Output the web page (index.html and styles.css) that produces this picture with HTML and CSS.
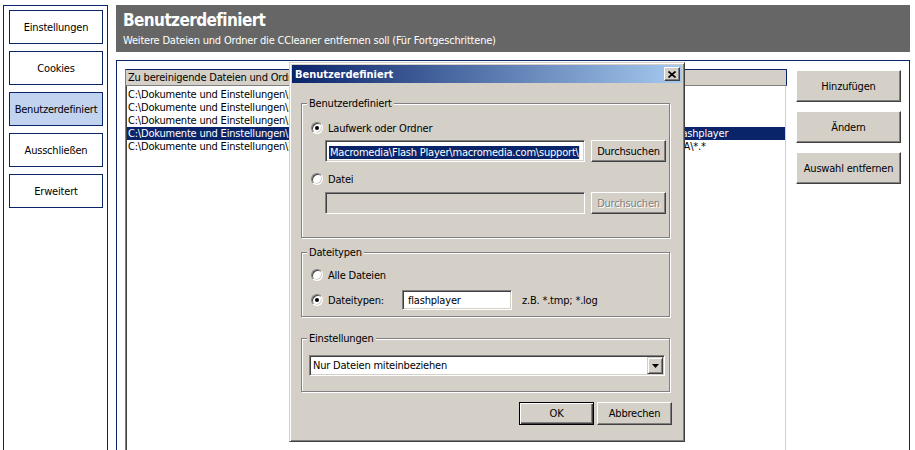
FILE: index.html
```html
<!DOCTYPE html>
<html lang="de">
<head>
  <meta charset="UTF-8" />
  <meta name="viewport" content="width=device-width, initial-scale=1.0" />
  <title>Benutzerdefiniert - CCleaner</title>
  <link rel="stylesheet" href="styles.css">
</head>
<body>

  <div class="app">
    <!-- linke Navigation -->
    <aside class="sidebar">
      <button class="nav-btn">Einstellungen</button>
      <button class="nav-btn">Cookies</button>
      <button class="nav-btn active">Benutzerdefiniert</button>
      <button class="nav-btn">Ausschließen</button>
      <button class="nav-btn">Erweitert</button>
    </aside>

    <main class="main">
      <header class="page-head">
        <h1>Benutzerdefiniert</h1>
        <p>Weitere Dateien und Ordner die CCleaner entfernen soll (Für Fortgeschrittene)</p>
      </header>

      <section class="panel">
        <div class="file-list">
          <div class="list-head">Zu bereinigende Dateien und Ordner</div>
          <ul class="list-body">
            <li>C:\Dokumente und Einstellungen\Benutzer\Lokale Einstellungen\Temp\*.tmp</li>
            <li>C:\Dokumente und Einstellungen\Benutzer\Recent\*.lnk</li>
            <li>C:\Dokumente und Einstellungen\Benutzer\Anwendungsdaten\Sun\Java\*.*</li>
            <li class="sel">C:\Dokumente und Einstellungen\Benutzer\Anwendungsdaten\Macromedia\Flash Player\macromedia.com\support\flashplayer</li>
            <li>C:\Dokumente und Einstellungen\Benutzer\Anwendungsdaten\Macromedia\Flash Player\#SharedObjects\Q7XK2ZPMA\*.*</li>
          </ul>
        </div>
        <div class="side-actions">
          <button class="btn">Hinzufügen</button>
          <button class="btn">Ändern</button>
          <button class="btn">Auswahl entfernen</button>
        </div>
      </section>
    </main>
  </div>

  <!-- Dialog liegt über der Liste -->
  <div class="dialog">
    <div class="dlg-title">
      <span>Benutzerdefiniert</span>
      <button class="dlg-close">
        <svg width="8" height="7" viewBox="0 0 8 7"><path d="M0.5 0.5 L7.5 6.5 M7.5 0.5 L0.5 6.5" stroke="#000" stroke-width="1.7" fill="none"/></svg>
      </button>
    </div>

    <fieldset class="group">
      <legend>Benutzerdefiniert</legend>
      <div class="group-body g-path">
        <div class="opt"><span class="radio on"></span>Laufwerk oder Ordner</div>
        <div class="path-row">
          <div class="field"><span class="selected">Macromedia\Flash Player\macromedia.com\support\</span><span class="caret"></span></div>
          <button class="btn small">Durchsuchen</button>
        </div>
        <div class="opt gap-top"><span class="radio"></span>Datei</div>
        <div class="path-row second">
          <div class="field disabled"></div>
          <button class="btn small" disabled>Durchsuchen</button>
        </div>
      </div>
    </fieldset>

    <fieldset class="group g2">
      <legend>Dateitypen</legend>
      <div class="group-body g-types">
        <div class="opt"><span class="radio"></span>Alle Dateien</div>
        <div class="opt types-row">
          <span class="radio on"></span>
          <span class="type-label">Dateitypen:</span>
          <div class="field type-field">flashplayer</div>
          <span class="hint">z.B. *.tmp; *.log</span>
        </div>
      </div>
    </fieldset>

    <fieldset class="group g3">
      <legend>Einstellungen</legend>
      <div class="group-body g-mode">
        <div class="combo">
          <span>Nur Dateien miteinbeziehen</span>
          <span class="combo-btn">
            <svg width="7" height="4" viewBox="0 0 7 4"><path d="M0 0 H7 L3.5 4 Z" fill="#000"/></svg>
          </span>
        </div>
      </div>
    </fieldset>

    <div class="dlg-buttons">
      <button class="btn default">OK</button>
      <button class="btn">Abbrechen</button>
    </div>
  </div>

</body>
</html>
```

FILE: styles.css
```css
* {
  box-sizing: border-box;
}

html, body {
  margin: 0;
  height: 450px;
  overflow: hidden;
}

body {
  font-family: "DejaVu Sans Condensed", "DejaVu Sans", sans-serif;
  font-stretch: condensed;
  font-size: 11px;
  letter-spacing: -0.2px;
  color: #000;
  background: #fff;
  position: relative;
}

button {
  font: inherit;
  color: inherit;
  letter-spacing: inherit;
  padding: 0;
  cursor: pointer;
}

.app {
  display: flex;
  gap: 8px;
  padding: 5px 0 0 3px;
  height: 470px;
}

/* linke Navigation */
.sidebar {
  width: 105px;
  border: 1px solid #0a246a;
  border-bottom: none;
  padding: 4px 0 0 5px;
  display: flex;
  flex-direction: column;
  gap: 7px;
}

.nav-btn {
  width: 94px;
  height: 34px;
  background: #fff;
  border: 1px solid #0a246a;
  text-align: center;
}

.nav-btn.active {
  background: #c2d3f0;
}

.main {
  width: 794px;
  display: flex;
  flex-direction: column;
  gap: 8px;
}

.page-head {
  height: 47px;
  background: #666;
  color: #fff;
  padding: 4px 7px 0;
}

.page-head h1 {
  margin: 0;
  font-size: 17px;
  font-weight: bold;
  letter-spacing: -0.6px;
  line-height: 22px;
}

.page-head p {
  margin: 3px 0 0;
  line-height: 13px;
}

.panel {
  flex: 1;
  display: flex;
  gap: 9px;
  border: 1px solid #0a246a;
  border-bottom: none;
  padding: 8px 8px 0 8px;
}

.file-list {
  width: 662px;
  display: flex;
  flex-direction: column;
}

.list-head {
  height: 17px;
  background: #d4d0c8;
  border: 1px solid;
  border-color: #0a246a #0a246a #808080 #808080;
  padding-left: 2px;
  line-height: 15px;
  white-space: nowrap;
  overflow: hidden;
}

.list-body {
  flex: 1;
  list-style: none;
  margin: 0 1px 0 0;
  padding: 2px 0 0 1px;
  border-left: 1px solid #808080;
  border-right: 1px solid #d4d0c8;
  box-shadow: inset 1px 0 0 #404040;
  overflow: hidden;
}

.list-body li {
  height: 13px;
  line-height: 13px;
  padding-left: 1px;
  white-space: nowrap;
}

.list-body li.sel {
  background: #0a246a;
  color: #fff;
}

.side-actions {
  width: 105px;
  padding-top: 1px;
  display: flex;
  flex-direction: column;
  gap: 9px;
}

/* klassischer Windows-Button */
.btn {
  height: 32px;
  background: #d4d0c8;
  border: 1px solid;
  border-color: #fff #404040 #404040 #fff;
  box-shadow: inset -1px -1px 0 #808080;
  text-align: center;
}

.btn.small {
  width: 75px;
  height: 22px;
}

.btn:disabled {
  color: #808080;
  text-shadow: 1px 1px 0 #fff;
  cursor: default;
}

/* Dialog */
.dialog {
  position: absolute;
  left: 289px;
  top: 62px;
  width: 396px;
  height: 380px;
  background: #d4d0c8;
  border: 1px solid;
  border-color: #d4d0c8 #404040 #404040 #d4d0c8;
  box-shadow: inset 1px 1px 0 #fff, inset -1px -1px 0 #808080;
  padding: 2px;
}

.dlg-title {
  height: 18px;
  background: linear-gradient(to right, #0a246a, #a6caf0);
  color: #fff;
  font-weight: bold;
  letter-spacing: 0;
  display: flex;
  align-items: center;
  justify-content: space-between;
  padding: 0 2px 0 3px;
}

.dlg-close {
  width: 16px;
  height: 14px;
  background: #d4d0c8;
  border: 1px solid;
  border-color: #fff #404040 #404040 #fff;
  box-shadow: inset -1px -1px 0 #808080;
  display: flex;
  align-items: center;
  justify-content: center;
}

.group {
  margin: 14px 12px 0 9px;
  padding: 0;
  border: 1px solid #808080;
  box-shadow: inset 1px 1px 0 #fff, 1px 1px 0 #fff;
  min-width: 0;
}

.group legend {
  margin-left: 5px;
  padding: 0 2px;
  line-height: 13px;
  background: #d4d0c8;
}

.group.g2 {
  margin-top: 8px;
}

.group.g3 {
  margin-top: 15px;
}

.g-path {
  padding: 7px 0 23px 9px;
}

.g-types {
  padding: 5px 0 5px 9px;
}

.g-mode {
  padding: 10px 0 15px 7px;
}

.opt {
  height: 22px;
  display: flex;
  align-items: center;
  gap: 5px;
  white-space: nowrap;
}

.opt.gap-top {
  margin-top: 6px;
}

.types-row {
  margin-top: 3px;
  gap: 0;
}

.types-row .radio {
  margin-right: 5px;
}

.type-label {
  width: 74px;
}

.hint {
  margin-left: 10px;
}

.radio {
  position: relative;
  flex: none;
  width: 12px;
  height: 12px;
  border-radius: 50%;
  background: #fff;
  border: 1px solid;
  border-color: #808080 #fff #fff #808080;
  box-shadow: inset 1px 1px 0 #404040, inset -1px -1px 0 #d4d0c8;
}

.radio.on::after {
  content: "";
  position: absolute;
  left: 3px;
  top: 3px;
  width: 4px;
  height: 4px;
  border-radius: 50%;
  background: #000;
}

.path-row {
  display: flex;
  gap: 6px;
  margin: 1px 0 0 14px;
  height: 22px;
}

.path-row.second {
  margin-top: 2px;
}

/* versenkte Eingabefelder */
.field {
  width: 260px;
  height: 22px;
  background: #fff;
  border: 1px solid;
  border-color: #808080 #fff #fff #808080;
  box-shadow: inset 1px 1px 0 #404040, inset -1px -1px 0 #d4d0c8;
  padding: 2px 0 0 3px;
  display: flex;
  align-items: center;
  white-space: nowrap;
  overflow: hidden;
}

.field.disabled {
  background: #d4d0c8;
}

.field .selected {
  background: #0a246a;
  color: #fff;
  line-height: 13px;
  padding-left: 1px;
}

.field .caret {
  width: 1px;
  height: 13px;
  background: #f0d8a0;
}

.type-field {
  width: 110px;
  height: 20px;
  padding: 1px 0 0 5px;
}

.combo {
  width: 356px;
  height: 21px;
  background: #fff;
  border: 1px solid;
  border-color: #808080 #fff #fff #808080;
  box-shadow: inset 1px 1px 0 #404040, inset -1px -1px 0 #d4d0c8;
  padding: 1px 1px 1px 3px;
  display: flex;
  align-items: center;
  justify-content: space-between;
}

.combo-btn {
  width: 16px;
  height: 17px;
  background: #d4d0c8;
  border: 1px solid;
  border-color: #d4d0c8 #404040 #404040 #d4d0c8;
  box-shadow: inset 1px 1px 0 #fff, inset -1px -1px 0 #808080;
  display: flex;
  align-items: center;
  justify-content: center;
}

.dlg-buttons {
  display: flex;
  justify-content: flex-end;
  gap: 3px;
  margin: 10px 10px 0 0;
}

.dlg-buttons .btn {
  width: 75px;
  height: 23px;
}

.btn.default {
  border-color: #000;
  box-shadow: inset 1px 1px 0 #fff, inset -1px -1px 0 #404040, inset -2px -2px 0 #808080;
}
```
